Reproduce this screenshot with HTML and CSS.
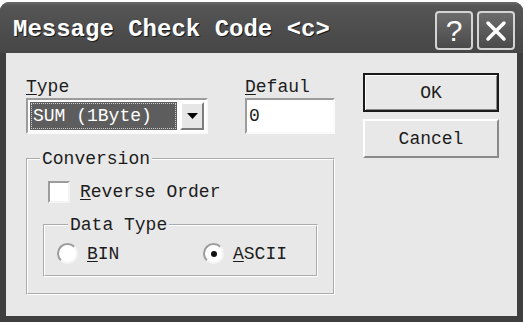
FILE: index.html
```html
<!DOCTYPE html>
<html lang="en">
<head>
    <meta charset="UTF-8">
    <title>Message Check Code</title>
    <link rel="stylesheet" href="styles.css">
</head>
<body>
    <div class="window">
        <div class="titlebar">
            <span class="title">Message Check Code &lt;c&gt;</span>
            <div class="title-btns">
                <span class="tbtn help">?</span>
                <span class="tbtn close">
                    <svg width="22" height="22" viewBox="0 0 22 22">
                        <path d="M3 3 L19 19 M19 3 L3 19" stroke="#fff" stroke-width="3.5" stroke-linecap="round" fill="none"/>
                    </svg>
                </span>
            </div>
        </div>

        <div class="client">
            <div class="main">
                <div class="fields">
                    <div class="field">
                        <label><u>T</u>ype</label>
                        <div class="combo">
                            <span class="combo-value"><span class="focus">SUM (1Byte)</span></span>
                            <span class="combo-btn">
                                <svg width="11" height="6" viewBox="0 0 11 6"><path d="M0 0 H11 L5.5 6 Z" fill="#000"/></svg>
                            </span>
                        </div>
                    </div>
                    <div class="field field-default">
                        <label><u>D</u>efaul</label>
                        <div class="edit">0</div>
                    </div>
                </div>

                <!-- Conversion group -->
                <fieldset class="group conversion">
                    <legend>Conversion</legend>
                    <div class="check-row">
                        <span class="checkbox"></span>
                        <span><u>R</u>everse Order</span>
                    </div>
                    <fieldset class="group datatype">
                        <legend>Data Type</legend>
                        <div class="radio-row">
                            <span class="radio-opt bin"><span class="radio"></span><span><u>B</u>IN</span></span>
                            <span class="radio-opt"><span class="radio checked"></span><span><u>A</u>SCII</span></span>
                        </div>
                    </fieldset>
                </fieldset>
            </div>

            <div class="buttons">
                <button class="btn default">OK</button>
                <button class="btn">Cancel</button>
            </div>
        </div>
    </div>
</body>
</html>
```

FILE: styles.css
```css
/* General */
body {
    margin: 0;
    background: #fff;
    font-family: "Liberation Mono", "DejaVu Sans Mono", monospace;
    font-size: 18px;
    color: #1c1c1c;
}

u {
    text-decoration-thickness: 1px;
    text-underline-offset: 2px;
}

/* Window frame */
.window {
    margin-top: 2px;
    width: 511px;
    padding: 0 6px 6px 6px;
    background: #3f3f3f;
    border-radius: 9px 9px 0 0;
}

.titlebar {
    margin: 0 -6px;
    height: 51px;
    display: flex;
    align-items: center;
    justify-content: space-between;
    padding: 0 8px 0 13px;
    border-radius: 9px 9px 0 0;
    background: linear-gradient(#6a6a6a 0, #555 4px, #4c4c4c 30px, #474747 100%);
}

.title {
    padding-top: 4px;
    font-size: 24px;
    line-height: 24px;
    font-weight: bold;
    color: #fff;
    text-shadow: 1px 1px 0 #1a1a1a;
    letter-spacing: 0;
}

.title-btns {
    display: flex;
    gap: 4px;
    margin-top: 6px;
}

.tbtn {
    width: 34px;
    height: 35px;
    border: 2px solid #d4d4d4;
    border-radius: 4px;
    background: linear-gradient(#6c6c6c, #4a4a4a);
    display: flex;
    align-items: center;
    justify-content: center;
    color: #fff;
}

.tbtn.help {
    font-family: "Liberation Sans", Arial, sans-serif;
    font-size: 30px;
    line-height: 30px;
}

/* Client area */
.client {
    height: 263px;
    background: #e8e8e8;
    display: flex;
    padding-left: 20px;
    box-sizing: border-box;
}

.main {
    padding-top: 25px;
}

.fields {
    display: flex;
    gap: 37px;
}

.field label {
    display: block;
    line-height: 18px;
    height: 18px;
    margin-bottom: 2px;
}

.combo {
    width: 182px;
    height: 36px;
    box-sizing: border-box;
    border: 2px solid;
    border-color: #9c9c9c #fafafa #fafafa #9c9c9c;
    background: #fff;
    padding: 2px;
    display: flex;
    gap: 3px;
}

.combo-value {
    flex: 1;
    background: #5d5d5d;
    color: #fff;
    padding: 1px;
    display: flex;
}

.focus {
    flex: 1;
    border: 1px dotted #cfcfcf;
    line-height: 24px;
    padding-left: 1px;
}

.combo-btn {
    width: 24px;
    box-sizing: border-box;
    border: 2px solid;
    border-color: #fff #7c7c7c #7c7c7c #fff;
    background: #e6e6e6;
    display: flex;
    align-items: center;
    justify-content: center;
}

.edit {
    width: 90px;
    height: 36px;
    box-sizing: border-box;
    border: 2px solid;
    border-color: #9c9c9c #fafafa #fafafa #9c9c9c;
    background: #fff;
    padding: 6px 2px;
    line-height: 20px;
}

/* Group boxes */
.group {
    margin: 0;
    border: 2px groove #fff;
    padding: 0;
    min-width: 0;
}

.group legend {
    padding: 0 2px;
    line-height: 18px;
}

.conversion {
    width: 309px;
    box-sizing: border-box;
    margin-top: 16px;
    padding: 0 0 16px 0;
}

.conversion > legend {
    margin-left: 12px;
}

.check-row {
    display: flex;
    align-items: center;
    gap: 10px;
    margin: 13px 0 0 20px;
}

.checkbox {
    width: 22px;
    height: 22px;
    box-sizing: border-box;
    border: 2px solid;
    border-color: #9c9c9c #f4f4f4 #f4f4f4 #9c9c9c;
    background: #fff;
}

.datatype {
    width: 275px;
    box-sizing: border-box;
    margin: 13px 0 0 15px;
    padding: 0 0 11px 12px;
}

.datatype > legend {
    margin-left: 11px;
}

.radio-row {
    display: flex;
    margin-top: 9px;
}

.radio-opt {
    display: flex;
    align-items: center;
    gap: 9px;
}

.radio-opt.bin {
    width: 146px;
}

.radio {
    width: 21px;
    height: 21px;
    box-sizing: border-box;
    border-radius: 50%;
    border: 2px solid;
    border-color: #9c9c9c #f4f4f4 #f4f4f4 #9c9c9c;
    background: #fff;
    display: flex;
    align-items: center;
    justify-content: center;
}

.radio.checked::after {
    content: "";
    width: 6px;
    height: 6px;
    border-radius: 50%;
    background: #111;
}

/* Buttons */
.buttons {
    margin: 20px 18px 0 auto;
    display: flex;
    flex-direction: column;
    gap: 7px;
}

.btn {
    width: 136px;
    height: 39px;
    font-family: inherit;
    font-size: 18px;
    color: #1c1c1c;
    background: #e8e8e8;
    border: 2px solid;
    border-color: #fff #8a8a8a #8a8a8a #fff;
    padding: 0;
}

.btn.default {
    border: 2px solid #1a1a1a;
    box-shadow: inset 1px 1px 0 #fff, inset -1px -1px 0 #8a8a8a;
}
```
